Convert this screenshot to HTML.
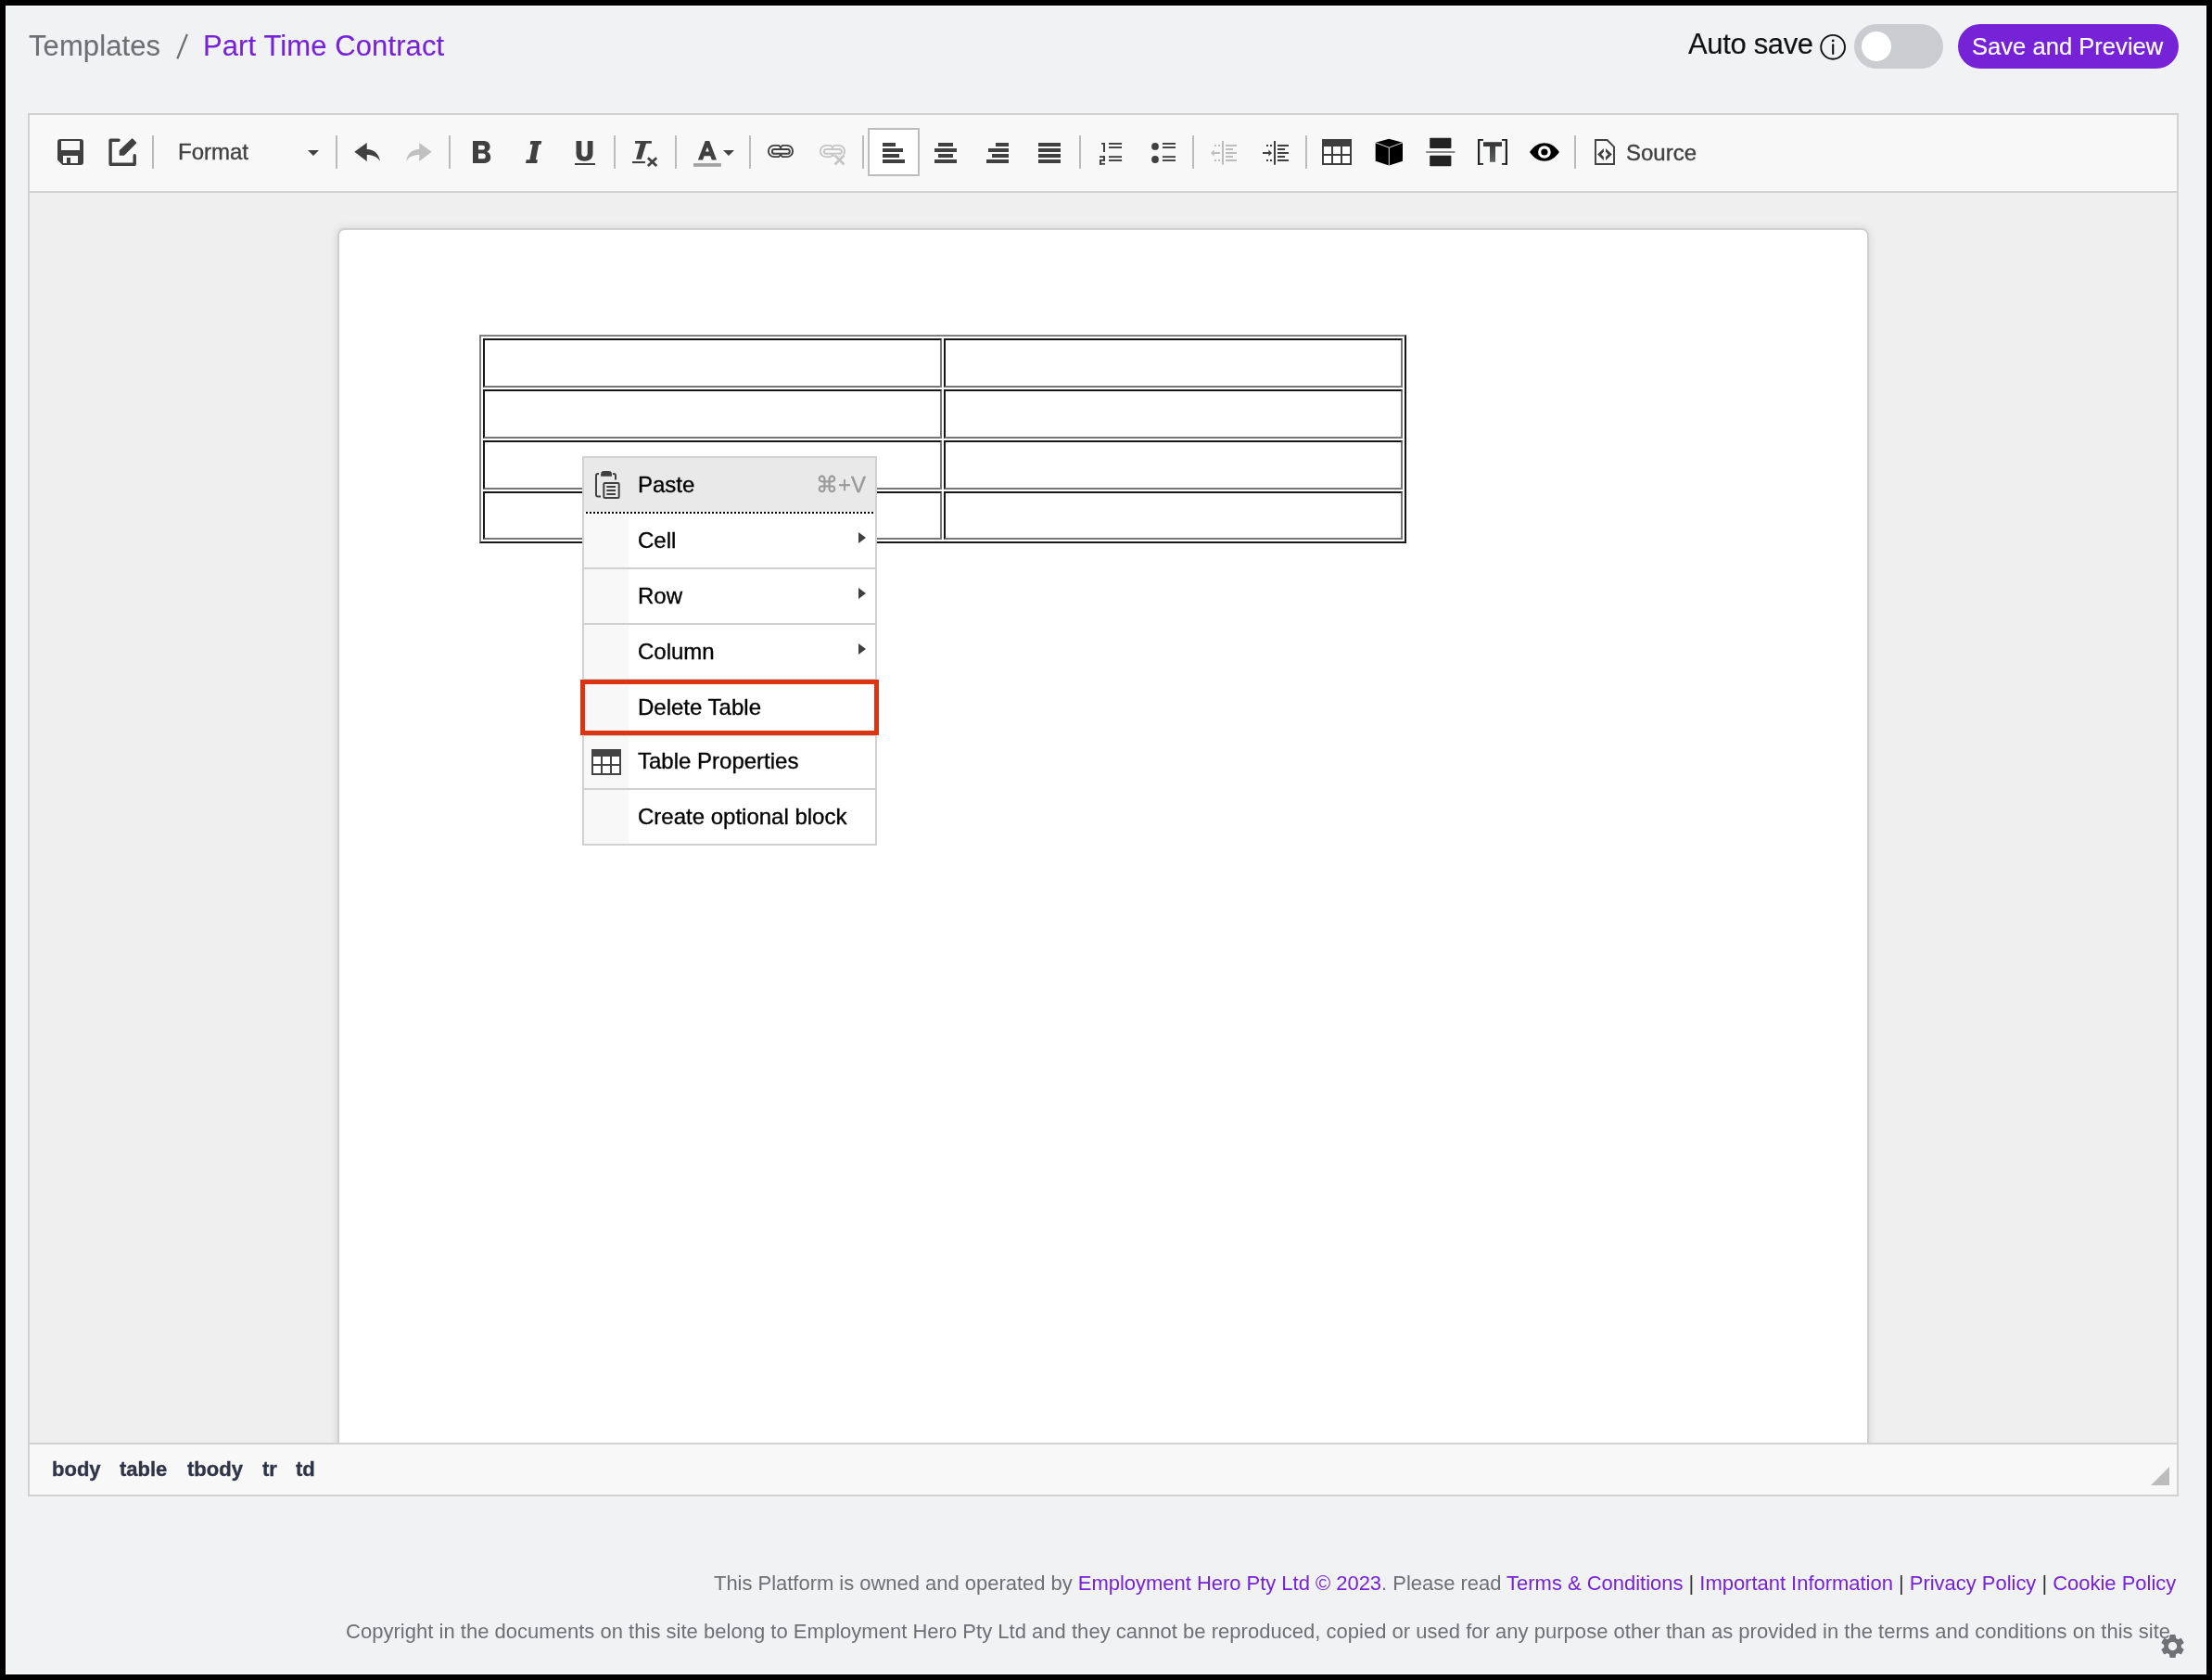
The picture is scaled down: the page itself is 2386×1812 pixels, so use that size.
<!DOCTYPE html>
<html><head><meta charset="utf-8"><title>Part Time Contract</title>
<style>
html,body{margin:0;padding:0;}
body{width:2386px;height:1812px;background:#000;position:relative;overflow:hidden;font-family:"Liberation Sans", sans-serif;}
.a{position:absolute;box-sizing:content-box;}
.t{position:absolute;white-space:nowrap;font-family:"Liberation Sans", sans-serif;will-change:transform;-webkit-text-stroke:0.35px currentColor;}
svg.a{display:block;}
table.a td{padding:0}
</style></head><body>
<div class="a" style="left:6px;top:6px;width:2372px;height:1798px;border:1px solid #fff;background:#f1f2f4"></div>
<div class="t" style="left:31px;top:29.76px;font-size:31px;line-height:39px;color:#6e6f73;font-weight:normal;letter-spacing:0.1px;-webkit-text-stroke:0.12px currentColor">Templates</div>
<svg class="a" style="left:188px;top:35px;" width="16" height="30" viewBox="0 0 16 30"><path d="M3.3,28.4 L13.9,1.9" stroke="#6e6f73" stroke-width="2.3" stroke-linecap="butt"/></svg>
<div class="t" style="left:219px;top:29.76px;font-size:31px;line-height:39px;color:#7622d7;font-weight:normal;letter-spacing:0.1px;-webkit-text-stroke:0.12px currentColor">Part Time Contract</div>
<div class="t" style="left:1821px;top:27.76px;font-size:31px;line-height:39px;color:#111;font-weight:normal;letter-spacing:-0.35px;-webkit-text-stroke:0.15px currentColor">Auto save</div>
<svg class="a" style="left:1962px;top:36px;" width="30" height="30" viewBox="0 0 30 30"><circle cx="15.1" cy="14.8" r="12.9" fill="none" stroke="#111" stroke-width="1.9"/><path d="M15.2,12.3 V21.9" stroke="#111" stroke-width="2.1" stroke-linecap="round"/><circle cx="15.2" cy="7.9" r="1.4" fill="#111"/></svg>
<div class="a" style="left:2000px;top:26px;width:96px;height:48px;background:#cbcccf;border-radius:24px"></div>
<div class="a" style="left:2008px;top:34px;width:32px;height:32px;background:#fff;border-radius:50%"></div>
<div class="a" style="left:2112px;top:26px;width:238px;height:48px;background:#7622d7;border-radius:24px"></div>
<div class="t" style="left:2127px;top:34.13px;font-size:25.6px;line-height:32px;color:#fff;font-weight:normal;-webkit-text-stroke:0.15px currentColor">Save and Preview</div>
<div class="a" style="left:30px;top:122px;width:2316px;height:1488px;border:2px solid #d1d1d1;background:#efefef"></div>
<div class="a" style="left:32px;top:124px;width:2316px;height:82px;background:#f8f8f8"></div>
<div class="a" style="left:32px;top:206px;width:2316px;height:2px;background:#d1d1d1"></div>
<div class="a" style="left:32px;top:1556px;width:2316px;height:2px;background:#d1d1d1"></div>
<div class="a" style="left:32px;top:1558px;width:2316px;height:54px;background:#f8f8f8"></div>
<div class="a" style="left:32px;top:208px;width:2316px;height:1348px;overflow:hidden;"><div style="position:absolute;left:332px;top:38px;width:1648px;height:1400px;background:#fff;border:2px solid #d0d0d0;border-radius:8px;box-shadow:0 0 10px rgba(0,0,0,0.12)"></div></div>
<div class="a" style="left:164px;top:146px;width:2px;height:36px;background:#bcbcbc"></div>
<div class="a" style="left:362px;top:146px;width:2px;height:36px;background:#bcbcbc"></div>
<div class="a" style="left:484px;top:146px;width:2px;height:36px;background:#bcbcbc"></div>
<div class="a" style="left:662px;top:146px;width:2px;height:36px;background:#bcbcbc"></div>
<div class="a" style="left:728px;top:146px;width:2px;height:36px;background:#bcbcbc"></div>
<div class="a" style="left:808px;top:146px;width:2px;height:36px;background:#bcbcbc"></div>
<div class="a" style="left:930px;top:146px;width:2px;height:36px;background:#bcbcbc"></div>
<div class="a" style="left:1164px;top:146px;width:2px;height:36px;background:#bcbcbc"></div>
<div class="a" style="left:1286px;top:146px;width:2px;height:36px;background:#bcbcbc"></div>
<div class="a" style="left:1408px;top:146px;width:2px;height:36px;background:#bcbcbc"></div>
<div class="a" style="left:1698px;top:146px;width:2px;height:36px;background:#bcbcbc"></div>
<svg class="a" style="left:60px;top:148px;" width="32" height="32" viewBox="0 0 32 32"><path fill="#404040" fill-rule="evenodd" d="M5,2 H27 Q30,2 30,5 V27 Q30,30 27,30 H7.5 L2,24.5 V5 Q2,2 5,2 Z M6,4 V14 H26 V4 Z M8,20 V28 H12 V22 H16 V28 H24 V20 Z"/></svg>
<svg class="a" style="left:116px;top:148px;" width="32" height="32" viewBox="0 0 32 32"><path d="M12,3.25 H3.1 V29.3 H29.2 V19.7" fill="none" stroke="#404040" stroke-width="3.4" stroke-linecap="round" stroke-linejoin="round"/><path fill="#404040" d="M12.7,19.8 V14.3 L25.8,1.7 Q26.6,1 27.4,1.7 L30.9,5.2 Q31.6,6 30.9,6.8 L17.9,19.8 Z"/></svg>
<div class="t" style="left:192px;top:148.68px;font-size:24px;line-height:30px;color:#404040;font-weight:normal;">Format</div>
<svg class="a" style="left:332px;top:162px;" width="12" height="6" viewBox="0 0 12 6"><path d="M0,0 H12 L6,6 Z" fill="#404040"/></svg>
<svg class="a" style="left:380px;top:148px;" width="32" height="32" viewBox="0 0 32 32"><path fill="#404040" d="M2.3,15.75 L15.75,6 V12.9 C23.5,12.9 29,18 29.9,26 C27,21 22,19 15.75,19 V26 Z"/></svg>
<svg class="a" style="left:436px;top:148px;" width="32" height="32" viewBox="0 0 32 32"><g transform="translate(32,0) scale(-1,1)"><path fill="#c0c0c0" d="M2.3,15.75 L15.75,6 V12.9 C23.5,12.9 29,18 29.9,26 C27,21 22,19 15.75,19 V26 Z"/></g></svg>
<svg class="a" style="left:504px;top:148px;" width="32" height="32" viewBox="0 0 32 32"><path fill="#404040" fill-rule="evenodd" d="M6,4 H17 C22.3,4 24.6,6.6 24.6,10.2 C24.6,12.9 23.2,14.6 21.2,15.5 C23.6,16.4 25.2,18.6 25.2,21.7 C25.2,25.6 22.6,28 17.6,28 H6 Z M12,8.8 V13.6 H16.4 C18.1,13.6 18.9,12.8 18.9,11.2 C18.9,9.6 18.1,8.8 16.4,8.8 Z M12,17.6 V23.2 H16.9 C18.8,23.2 19.8,22.3 19.8,20.4 C19.8,18.5 18.8,17.6 16.9,17.6 Z"/></svg>
<svg class="a" style="left:560px;top:148px;" width="32" height="32" viewBox="0 0 32 32"><path fill="#404040" d="M12.4,4 H24.2 L23.5,7.7 H21.1 L17.9,24.3 H19.9 L19.2,28 H7 L7.7,24.3 H11.4 L14.6,7.7 H11.7 Z"/></svg>
<svg class="a" style="left:616px;top:148px;" width="32" height="32" viewBox="0 0 32 32"><path fill="#404040" d="M5.5,4 H11.3 V17.3 C11.3,19.9 12.5,21 14.5,21 C16.5,21 17.7,19.9 17.7,17.3 V4 H23.5 V17.3 C23.5,23 20,25.8 14.5,25.8 C9,25.8 5.5,23 5.5,17.3 Z"/><rect x="4" y="28" width="22" height="2" fill="#404040"/></svg>
<svg class="a" style="left:680px;top:148px;" width="32" height="32" viewBox="0 0 32 32"><path fill="#404040" d="M5.05,4.1 H22.9 V6.8 H17 L11.8,23.8 H6.1 L10.7,6.8 H5.05 Z"/><rect x="2" y="26" width="13.9" height="2.1" fill="#404040"/><path d="M18.9,22.3 L28.2,31 M28.2,22.3 L18.9,31" stroke="#404040" stroke-width="2.7"/></svg>
<svg class="a" style="left:746px;top:148px;" width="32" height="32" viewBox="0 0 32 32"><path fill="#404040" fill-rule="evenodd" d="M14.7,4 H19.2 L27,24.5 H21.8 L20.3,20.3 H13.6 L12.1,24.5 H6.9 Z M15,15.5 H18.9 L17,10.8 Z"/><rect x="2" y="28.1" width="29.8" height="3.7" fill="#a0a0a0"/></svg>
<svg class="a" style="left:780px;top:162px;" width="12" height="6" viewBox="0 0 12 6"><path d="M0,0 H12 L6,6 Z" fill="#404040"/></svg>
<svg class="a" style="left:826px;top:148px;" width="32" height="32" viewBox="0 0 32 32"><g fill="none" stroke="#404040" stroke-width="1.9"><path d="M16,12.9 V10.9 L14,8.9 H9 A6.1,6.1 0 0 0 9,21.1 H14 L16,19.1 V17.1"/><path d="M16,10.9 L18,8.9 H23 A6.1,6.1 0 0 1 23,21.1 H18 L16,19.1"/><rect x="6.9" y="13" width="18.9" height="4.8" rx="2.4"/></g></svg>
<svg class="a" style="left:882px;top:148px;" width="32" height="32" viewBox="0 0 32 32"><g fill="none" stroke="#c6c6c6" stroke-width="1.9"><path d="M16,12.9 V10.9 L14,8.9 H9 A6.1,6.1 0 0 0 9,21.1 H14 L16,19.1 V17.1"/><path d="M16,10.9 L18,8.9 H23 A6.1,6.1 0 0 1 23,21.1 H18 L16,19.1"/><rect x="6.9" y="13" width="18.9" height="4.8" rx="2.4"/></g><path d="M18.5,19.5 L28.5,29.5 M28.5,19.5 L18.5,29.5" stroke="#f8f8f8" stroke-width="5"/><path d="M18.5,19.5 L28.5,29.5 M28.5,19.5 L18.5,29.5" stroke="#c6c6c6" stroke-width="2.8"/></svg>
<div class="a" style="left:936px;top:138px;width:52px;height:48px;border:2px solid #bcbcbc;background:#fff"></div>
<svg class="a" style="left:948px;top:148px;" width="32" height="32" viewBox="0 0 32 32"><rect x="4" y="6" width="14" height="4" fill="#404040"/><rect x="4" y="12" width="22" height="4" fill="#404040"/><rect x="4" y="18" width="18" height="4" fill="#404040"/><rect x="4" y="24" width="24" height="4" fill="#404040"/></svg>
<svg class="a" style="left:1004px;top:148px;" width="32" height="32" viewBox="0 0 32 32"><rect x="8" y="6" width="16" height="4" fill="#404040"/><rect x="4" y="12" width="24" height="4" fill="#404040"/><rect x="8" y="18" width="16" height="4" fill="#404040"/><rect x="4" y="24" width="24" height="4" fill="#404040"/></svg>
<svg class="a" style="left:1060px;top:148px;" width="32" height="32" viewBox="0 0 32 32"><rect x="14" y="6" width="14" height="4" fill="#404040"/><rect x="6" y="12" width="22" height="4" fill="#404040"/><rect x="10" y="18" width="18" height="4" fill="#404040"/><rect x="4" y="24" width="24" height="4" fill="#404040"/></svg>
<svg class="a" style="left:1116px;top:148px;" width="32" height="32" viewBox="0 0 32 32"><rect x="4" y="6" width="24" height="4" fill="#404040"/><rect x="4" y="12" width="24" height="4" fill="#404040"/><rect x="4" y="18" width="24" height="4" fill="#404040"/><rect x="4" y="24" width="24" height="4" fill="#404040"/></svg>
<svg class="a" style="left:1182px;top:148px;" width="32" height="32" viewBox="0 0 32 32"><g fill="#404040"><rect x="6.1" y="6" width="3.9" height="1.8"/><rect x="8" y="6" width="2" height="10"/><rect x="4" y="20.2" width="6" height="1.8"/><rect x="8" y="20.2" width="2" height="5.6"/><rect x="4" y="24" width="6" height="1.8"/><rect x="4" y="24" width="2" height="5.7"/><rect x="4" y="27.9" width="6" height="1.8"/><rect x="14" y="6" width="14" height="1.9"/><rect x="14" y="10.1" width="14" height="1.9"/><rect x="14" y="20.2" width="14" height="1.9"/><rect x="14" y="24.1" width="14" height="1.9"/></g></svg>
<svg class="a" style="left:1238px;top:148px;" width="32" height="32" viewBox="0 0 32 32"><g fill="#404040"><circle cx="8" cy="9.9" r="3.9"/><circle cx="8" cy="24" r="3.9"/><rect x="16" y="6" width="14" height="1.9"/><rect x="16" y="10.1" width="14" height="1.9"/><rect x="16" y="20.2" width="14" height="1.9"/><rect x="16" y="24.1" width="14" height="1.9"/></g></svg>
<svg class="a" style="left:1304px;top:148px;" width="32" height="32" viewBox="0 0 32 32"><g fill="#bdbdbd"><rect x="6" y="8" width="2" height="2"/><rect x="10" y="8" width="2" height="2"/><rect x="6" y="24" width="2" height="2"/><rect x="10" y="24" width="2" height="2"/><rect x="14" y="4" width="2" height="25.7"/><rect x="18" y="8" width="12" height="2"/><rect x="18" y="12" width="8" height="2"/><rect x="18" y="16" width="12" height="2"/><rect x="18" y="20" width="8" height="2"/><rect x="18" y="24" width="12" height="2"/><rect x="4" y="16" width="8" height="2"/><path d="M2,17 L5.6,13.6 V20.4 Z"/></g></svg>
<svg class="a" style="left:1360px;top:148px;" width="32" height="32" viewBox="0 0 32 32"><g fill="#404040"><rect x="6" y="8" width="2" height="2"/><rect x="10" y="8" width="2" height="2"/><rect x="6" y="24" width="2" height="2"/><rect x="10" y="24" width="2" height="2"/><rect x="14" y="4" width="2" height="25.7"/><rect x="18" y="8" width="12" height="2"/><rect x="18" y="12" width="8" height="2"/><rect x="18" y="16" width="12" height="2"/><rect x="18" y="20" width="8" height="2"/><rect x="18" y="24" width="12" height="2"/><rect x="2" y="16" width="7" height="2"/><path d="M12,17 L8.4,13.6 V20.4 Z"/></g></svg>
<svg class="a" style="left:1426px;top:148px;" width="32" height="32" viewBox="0 0 32 32"><rect x="0" y="2" width="32" height="28" fill="#3f3f3f"/><g fill="#fff"><rect x="2" y="10" width="8" height="8"/><rect x="12" y="10" width="8" height="8"/><rect x="22" y="10" width="8" height="8"/><rect x="2" y="20" width="8" height="8"/><rect x="12" y="20" width="8" height="8"/><rect x="22" y="20" width="8" height="8"/></g></svg>
<svg class="a" style="left:1482px;top:148px;" width="32" height="32" viewBox="0 0 32 32"><path d="M16.3,1.8 L31,5.8 V25.7 L16.3,30.6 L1.7,25.7 V5.8 Z" fill="#000"/><path d="M1.7,5.8 L16.3,11.2 L31,5.8 M16.3,11.2 V30.6" fill="none" stroke="#eee" stroke-width="0.9"/></svg>
<svg class="a" style="left:1538px;top:148px;" width="32" height="32" viewBox="0 0 32 32"><rect x="4.2" y="0.7" width="23.2" height="11.3" rx="0.8" fill="#222"/><rect x="4.2" y="19.7" width="23.2" height="11.6" rx="0.8" fill="#222"/><rect x="0.3" y="15" width="31.1" height="2" fill="#888"/></svg>
<svg class="a" style="left:1594px;top:148px;" width="32" height="32" viewBox="0 0 32 32"><defs><linearGradient id="tg" x1="0" y1="0" x2="0" y2="1"><stop offset="0" stop-color="#333"/><stop offset="1" stop-color="#5e6262"/></linearGradient></defs><g fill="#222"><rect x="0" y="2" width="2.2" height="27.8"/><rect x="0" y="2" width="6" height="1.8"/><rect x="0" y="28" width="6" height="1.8"/><rect x="29.8" y="2" width="2.2" height="27.8"/><rect x="26" y="2" width="6" height="1.8"/><rect x="26" y="28" width="6" height="1.8"/></g><path fill="url(#tg)" d="M6,5.2 H26 V10 H19 V26.7 H13 V10 H6 Z"/></svg>
<svg class="a" style="left:1650px;top:148px;" width="32" height="32" viewBox="0 0 32 32"><path d="M0,16 C5,9 10,6.3 15.9,6.3 C21.8,6.3 26.8,9 31.9,16 C26.8,23 21.8,25.7 15.9,25.7 C10,25.7 5,23 0,16 Z" fill="#000"/><circle cx="15.9" cy="16" r="6.86" fill="#fff"/><circle cx="15.9" cy="16" r="3.6" fill="#000"/></svg>
<svg class="a" style="left:1716px;top:148px;" width="32" height="32" viewBox="0 0 32 32"><path d="M5,3 H17.6 L25,10.4 V29 H5 Z" fill="none" stroke="#404040" stroke-width="1.9"/><path fill="#404040" d="M13.9,11.9 V15.8 L11.2,18.5 L13.9,21.3 V25 L7.1,18.5 Z M16,11.9 V15.8 L18.7,18.5 L16,21.3 V25 L22.8,18.5 Z"/></svg>
<div class="t" style="left:1754px;top:149.68px;font-size:24px;line-height:30px;color:#404040;font-weight:normal;">Source</div>
<table class="a" style="left:517px;top:361px;width:996px;border-collapse:separate;border-spacing:2px;border:2px solid;border-color:#808080 #161616 #161616 #808080"><tbody><tr><td style="height:49px;border:2px solid;border-color:#161616 #777 #777 #161616;padding:0"></td><td style="height:49px;border:2px solid;border-color:#161616 #777 #777 #161616;padding:0"></td></tr><tr><td style="height:49px;border:2px solid;border-color:#161616 #777 #777 #161616;padding:0"></td><td style="height:49px;border:2px solid;border-color:#161616 #777 #777 #161616;padding:0"></td></tr><tr><td style="height:49px;border:2px solid;border-color:#161616 #777 #777 #161616;padding:0"></td><td style="height:49px;border:2px solid;border-color:#161616 #777 #777 #161616;padding:0"></td></tr><tr><td style="height:48px;border:2px solid;border-color:#161616 #777 #777 #161616;padding:0"></td><td style="height:48px;border:2px solid;border-color:#161616 #777 #777 #161616;padding:0"></td></tr></tbody></table>
<div class="a" style="left:628px;top:492px;width:314px;height:416px;border:2px solid #d1d1d1;background:#fff"></div>
<div class="a" style="left:630px;top:494px;width:314px;height:58px;background:#e9e9e9"></div>
<div class="a" style="left:630px;top:552px;width:314px;height:2px;background-image:linear-gradient(90deg,#000 50%,transparent 50%);background-size:4px 2px;background-position:2px 0;"></div>
<div class="a" style="left:630px;top:554px;width:48px;height:356px;background:#f8f8f8"></div>
<div class="a" style="left:630px;top:612px;width:314px;height:2px;background:#d1d1d1"></div>
<div class="a" style="left:630px;top:672px;width:314px;height:2px;background:#d1d1d1"></div>
<div class="a" style="left:630px;top:732px;width:314px;height:2px;background:#d1d1d1"></div>
<div class="a" style="left:630px;top:792px;width:314px;height:2px;background:#d1d1d1"></div>
<div class="a" style="left:630px;top:850px;width:314px;height:2px;background:#d1d1d1"></div>
<svg class="a" style="left:638px;top:504px;" width="32" height="38" viewBox="0 0 32 38"><g fill="none" stroke="#404040" stroke-width="2"><path d="M8,7 H7 Q5,7 5,9 V29.5 Q5,31.5 7,31.5 H10"/><path d="M23,7 H24 Q26,7 26,9 V13.5"/><rect x="13.3" y="17" width="16.4" height="16" rx="1.2"/></g><path d="M10.1,9.8 V7.2 Q10.1,3.9 13.4,3.9 H18.7 Q22,3.9 22,7.2 V9.8 Z" fill="#404040"/><g fill="#404040"><rect x="16.3" y="20" width="9.7" height="2"/><rect x="16.3" y="24" width="9.7" height="2"/><rect x="16.3" y="28" width="9.7" height="2"/></g></svg>
<div class="t" style="left:688px;top:507.68px;font-size:24px;line-height:30px;color:#000;font-weight:normal;">Paste</div>
<div class="t" style="left:880px;top:507.68px;font-size:24px;line-height:30px;color:#999;font-weight:normal;">&#8984;+V</div>
<div class="t" style="left:688px;top:567.68px;font-size:24px;line-height:30px;color:#000;font-weight:normal;">Cell</div>
<div class="t" style="left:688px;top:627.68px;font-size:24px;line-height:30px;color:#000;font-weight:normal;">Row</div>
<div class="t" style="left:688px;top:687.68px;font-size:24px;line-height:30px;color:#000;font-weight:normal;">Column</div>
<svg class="a" style="left:926px;top:574px;" width="8" height="12" viewBox="0 0 8 12"><path d="M0,0 L8,6 L0,12 Z" fill="#404040"/></svg>
<svg class="a" style="left:926px;top:634px;" width="8" height="12" viewBox="0 0 8 12"><path d="M0,0 L8,6 L0,12 Z" fill="#404040"/></svg>
<svg class="a" style="left:926px;top:694px;" width="8" height="12" viewBox="0 0 8 12"><path d="M0,0 L8,6 L0,12 Z" fill="#404040"/></svg>
<div class="t" style="left:688px;top:747.68px;font-size:24px;line-height:30px;color:#000;font-weight:normal;">Delete Table</div>
<svg class="a" style="left:638px;top:808px;" width="32" height="28" viewBox="0 0 32 28"><rect x="0" y="0" width="32" height="28" fill="#444"/><g fill="#fff"><rect x="2" y="8" width="8" height="8"/><rect x="12" y="8" width="8" height="8"/><rect x="22" y="8" width="8" height="8"/><rect x="2" y="18" width="8" height="8"/><rect x="12" y="18" width="8" height="8"/><rect x="22" y="18" width="8" height="8"/></g></svg>
<div class="t" style="left:688px;top:805.68px;font-size:24px;line-height:30px;color:#000;font-weight:normal;">Table Properties</div>
<div class="t" style="left:688px;top:865.68px;font-size:24px;line-height:30px;color:#000;font-weight:normal;">Create optional block</div>
<div class="a" style="left:626px;top:733px;width:312px;height:50px;border:5px solid #dc3311"></div>
<div class="t" style="left:56px;top:1571.38px;font-size:22px;line-height:28px;color:#2f3447;font-weight:bold;">body</div>
<div class="t" style="left:129px;top:1571.38px;font-size:22px;line-height:28px;color:#2f3447;font-weight:bold;">table</div>
<div class="t" style="left:202px;top:1571.38px;font-size:22px;line-height:28px;color:#2f3447;font-weight:bold;">tbody</div>
<div class="t" style="left:283px;top:1571.38px;font-size:22px;line-height:28px;color:#2f3447;font-weight:bold;">tr</div>
<div class="t" style="left:319px;top:1571.38px;font-size:22px;line-height:28px;color:#2f3447;font-weight:bold;">td</div>
<svg class="a" style="left:2320px;top:1582px;" width="20" height="20" viewBox="0 0 20 20"><path d="M20,0 V20 H0 Z" fill="#bcbcbc"/></svg>
<div class="t" style="right:39px;top:1695.38px;font-size:22px;line-height:26px;color:#6e6f73;-webkit-text-stroke:0;letter-spacing:-0.025px">This Platform is owned and operated by <span style="color:#7622d7">Employment Hero Pty Ltd &copy; 2023</span>. Please read <span style="color:#7622d7">Terms &amp; Conditions</span> <span style="color:#333">|</span> <span style="color:#7622d7">Important Information</span> <span style="color:#333">|</span> <span style="color:#7622d7">Privacy Policy</span> <span style="color:#333">|</span> <span style="color:#7622d7">Cookie Policy</span></div>
<div class="t" style="right:39px;top:1747.38px;font-size:22px;line-height:26px;color:#6e6f73;-webkit-text-stroke:0;letter-spacing:0.02px">Copyright in the documents on this site belong to Employment Hero Pty Ltd and they cannot be reproduced, copied or used for any purpose other than as provided in the terms and conditions on this site.</div>
<svg class="a" style="left:2328.3px;top:1760.3px" width="31.1" height="31.1" viewBox="0 0 24 24"><path fill="#6f7177" d="M19.14,12.94c0.04-0.3,0.06-0.61,0.06-0.94c0-0.32-0.02-0.64-0.07-0.94l2.03-1.58c0.18-0.14,0.23-0.41,0.12-0.61 l-1.92-3.32c-0.12-0.22-0.37-0.29-0.59-0.22l-2.39,0.96c-0.5-0.38-1.03-0.7-1.62-0.94L14.4,2.81c-0.04-0.24-0.24-0.41-0.48-0.41 h-3.84c-0.24,0-0.43,0.17-0.47,0.41L9.25,5.35C8.66,5.59,8.12,5.92,7.63,6.29L5.24,5.33c-0.22-0.08-0.47,0-0.59,0.22L2.74,8.87 C2.62,9.08,2.66,9.34,2.86,9.48l2.03,1.58C4.84,11.36,4.8,11.69,4.8,12s0.02,0.64,0.07,0.94l-2.03,1.58 c-0.18,0.14-0.23,0.41-0.12,0.61l1.92,3.32c0.12,0.22,0.37,0.29,0.59,0.22l2.39-0.96c0.5,0.38,1.03,0.7,1.62,0.94l0.36,2.54 c0.05,0.24,0.24,0.41,0.48,0.41h3.84c0.24,0,0.44-0.17,0.47-0.41l0.36-2.54c0.59-0.24,1.13-0.56,1.62-0.94l2.39,0.96 c0.22,0.08,0.47,0,0.59-0.22l1.92-3.32c0.12-0.22,0.07-0.47-0.12-0.61L19.14,12.94z M12,15.6c-1.98,0-3.6-1.62-3.6-3.6 s1.62-3.6,3.6-3.6s3.6,1.62,3.6,3.6S13.98,15.6,12,15.6z"/></svg>
</body></html>
